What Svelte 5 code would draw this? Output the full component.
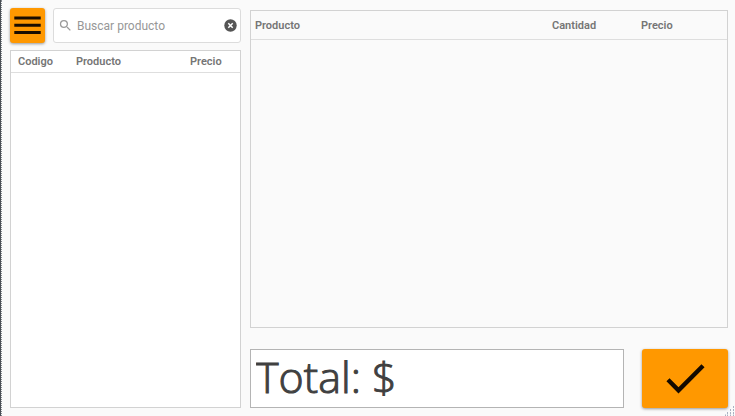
<script>
  let query = $state('');
  let total = $state('Total: $');
  const productColumns = ['Codigo', 'Producto', 'Precio'];
  const cartColumns = ['Producto', 'Cantidad', 'Precio'];
</script>

<main>
  <section class="catalog">
    <div class="toolbar">
      <button class="action menu" type="button" aria-label="Menu">
        <svg viewBox="0 0 35 35" width="35" height="35" aria-hidden="true">
          <path d="M4.300 10h26.400M4.300 17.300h26.400M4.300 24.500h26.400" stroke="#1a0d00" stroke-width="2.900" />
        </svg>
      </button>
      <div class="search">
        <svg viewBox="0 0 24 24" width="15" height="15" aria-hidden="true">
          <path fill="#9a9a9a" d="M15.5 14h-.79l-.28-.27A6.47 6.47 0 0 0 16 9.5 6.5 6.5 0 1 0 9.5 16c1.61 0 3.09-.59 4.23-1.57l.27.28v.79l5 4.99L20.49 19l-4.99-5zm-6 0C7.01 14 5 11.99 5 9.5S7.01 5 9.5 5 14 7.01 14 9.5 11.99 14 9.5 14z" />
        </svg>
        <input type="text" placeholder="Buscar producto" aria-label="Buscar producto" bind:value={query} />
        <button class="clear" type="button" aria-label="Borrar" onclick={() => (query = '')}>
          <svg viewBox="0 0 13 13" width="13" height="13" aria-hidden="true">
            <circle cx="6.5" cy="6.5" r="6.2" fill="#555" />
            <path d="M4.3 4.3l4.4 4.4M8.7 4.3l-4.4 4.4" stroke="#fff" stroke-width="1.5" />
          </svg>
        </button>
      </div>
    </div>
    <div class="panel white">
      <table class="products">
        <thead>
          <tr>
            {#each productColumns as column}<th scope="col">{column}</th>{/each}
          </tr>
        </thead>
      </table>
    </div>
  </section>

  <section class="sale">
    <div class="panel">
      <table class="cart">
        <thead>
          <tr>
            {#each cartColumns as column}<th scope="col">{column}</th>{/each}
          </tr>
        </thead>
      </table>
    </div>
    <div class="checkout">
      <input class="total" type="text" aria-label="Total" readonly value={total} />
      <button class="action confirm" type="button" aria-label="Confirmar">
        <svg viewBox="0 0 86 59" width="86" height="59" aria-hidden="true">
          <path d="M26 30.800L36.500 41.300L61 16.800" fill="none" stroke="#140a00" stroke-width="4.400" />
        </svg>
      </button>
    </div>
  </section>

  <svg class="grip" viewBox="0 0 10 10" width="10" height="10" aria-hidden="true">
    <path d="M8 1h1M5 4h1M8 4h1M2 7h1M5 7h1M8 7h1M0 9.500h1M2 9.500h1M5 9.500h1M8 9.500h1" stroke="#aab2c2" stroke-width="2" />
  </svg>
</main>

<style>
  :global(body) {
    background: #fafafa;
  }

  main {
    position: relative;
    box-sizing: border-box;
    min-height: 100vh;
    display: grid;
    grid-template-columns: 231px minmax(0, 1fr);
    gap: 9px;
    padding: 8px 7px 8px 9px;
    border-left: 1px solid #4a4f55;
    font-family: Roboto, 'Liberation Sans', sans-serif;
    color: #757575;
  }

  main::before {
    content: '';
    position: absolute;
    top: 0;
    bottom: 0;
    left: 0;
    border-left: 1px dotted #858a90;
  }

  section {
    display: flex;
    flex-direction: column;
  }

  .catalog {
    gap: 7px;
  }

  .sale {
    gap: 21px;
    padding-top: 2px;
  }

  .toolbar {
    display: flex;
    gap: 8px;
    height: 35px;
  }

  button {
    display: block;
    padding: 0;
    border: 0;
    background: none;
    cursor: pointer;
  }

  svg {
    display: block;
    flex: none;
  }

  .action {
    flex: none;
    border-radius: 3px;
    background: #ff9800;
    box-shadow: 0 1px 3px rgba(0, 0, 0, 0.4);
  }

  .menu {
    width: 35px;
  }

  .search {
    flex: 1;
    min-width: 0;
    box-sizing: border-box;
    display: flex;
    align-items: center;
    gap: 4px;
    padding: 0 3px 0 4px;
    border: 1px solid #dcdcdc;
    border-radius: 3px;
    background: #fff;
  }

  .search input {
    flex: 1;
    min-width: 0;
    padding: 0;
    border: 0;
    outline: 0;
    background: none;
    font: 12px/16px Roboto, 'Liberation Sans', sans-serif;
    color: #505050;
  }

  .search input::placeholder {
    color: #979797;
    opacity: 1;
  }

  .panel {
    flex: 1;
    border: 1px solid #d2d2d2;
  }

  .white {
    background: #fff;
  }

  table {
    width: 100%;
    table-layout: fixed;
    border-collapse: separate;
    border-spacing: 0;
  }

  th {
    box-sizing: border-box;
    padding: 0 0 0 4px;
    border-bottom: 1px solid #dedede;
    font-size: 11px;
    font-weight: 600;
    text-align: left;
  }

  .products th {
    height: 22px;
    padding-left: 7px;
  }

  .products th:first-child {
    width: 58px;
  }

  .products th:last-child {
    width: 57px;
  }

  .cart th {
    height: 29px;
  }

  .cart th:nth-child(2) {
    width: 89px;
  }

  .cart th:last-child {
    width: 90px;
  }

  .checkout {
    display: flex;
    gap: 18px;
    height: 59px;
  }

  .total {
    flex: 1;
    min-width: 0;
    box-sizing: border-box;
    padding: 0 5px 4px;
    border: 1px solid #b4b4b4;
    outline: 0;
    background: #fff;
    font: 300 43px/53px 'Open Sans', 'Noto Sans', sans-serif;
    color: #404040;
    -webkit-text-stroke: 1px #404040;
  }

  .confirm {
    width: 86px;
  }

  .grip {
    position: absolute;
    right: 0;
    bottom: 0;
  }
</style>
